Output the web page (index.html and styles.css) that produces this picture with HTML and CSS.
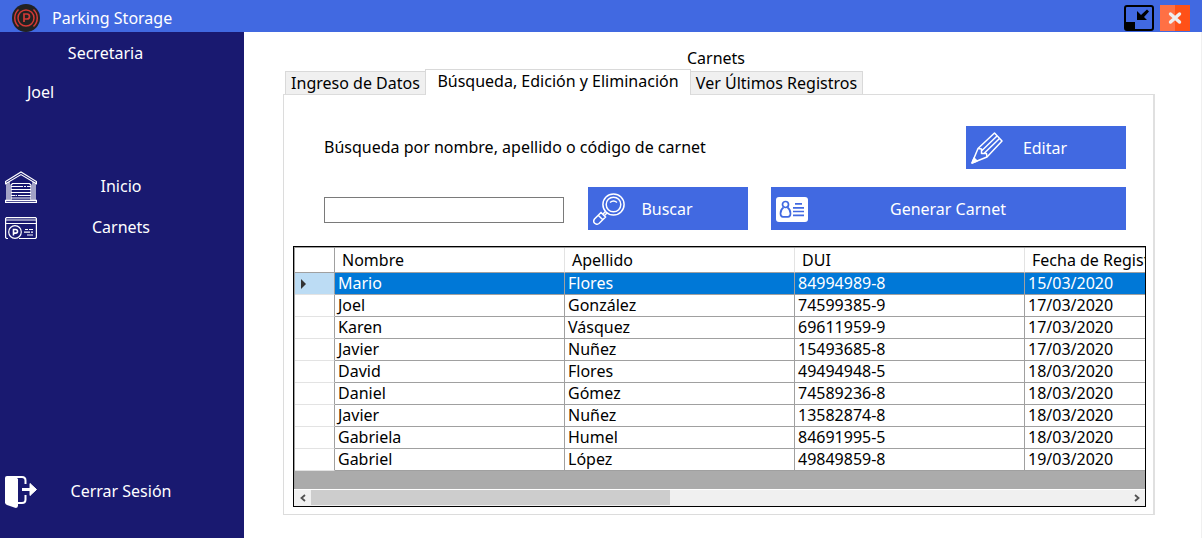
FILE: index.html
```html
<!DOCTYPE html>
<html lang="es">
<head>
<meta charset="utf-8">
<title>Parking Storage</title>
<link rel="stylesheet" href="styles.css">
</head>
<body>
<header class="titlebar">
  <svg class="logo" viewBox="0 0 28 28" width="28" height="28" fill="none" stroke="#d33a36" stroke-width="1.5">
    <circle cx="14" cy="14" r="14" fill="#222" stroke="none"/>
    <circle cx="14" cy="14" r="8"/>
    <path d="M12 18v-8h3a2.3 2.3 0 0 1 0 5h-3" stroke-width="1.7"/>
    <path d="M6.500 5.500a11.500 11.500 0 0 0 0 17M21.500 5.500a11.500 11.500 0 0 1 0 17"/>
  </svg>
  <h1 class="app-name">Parking Storage</h1>
  <div class="window-actions">
    <button class="window-button" type="button" aria-label="Restaurar">
      <svg viewBox="0 0 30 26" width="30" height="26">
        <rect x="1" y="1" width="28" height="24" rx="2" fill="none" stroke="#000" stroke-width="2"/>
        <path d="M1 17h10v8H1z"/>
        <path d="M13 6v9h10l-3-3 5-5.500-2-2-6 5.500z"/>
      </svg>
    </button>
    <button class="window-button" type="button" aria-label="Cerrar">
      <svg viewBox="0 0 30 26" width="30" height="26">
        <path fill="#ff7044" d="M0 0h15v26H0z"/><path fill="#ff5117" d="M15 0h15v26H15z"/>
        <path d="M10.500 9l9 8M19.500 9l-9 8" stroke="#eee" stroke-width="3.400" stroke-linecap="round"/>
      </svg>
    </button>
  </div>
</header>
<div class="layout">
  <aside class="sidebar">
    <p class="role">Secretaria</p>
    <p class="user">Joel</p>
    <nav class="menu">
      <button class="menu-item" type="button">
        <svg viewBox="0 0 32 32" width="32" height="32" fill="none" stroke="#fff" stroke-width="1.200">
          <path d="M.6 10.500L16 1l15.400 9.500v2.300L16 3.600.6 12.800zM2 12.200V29M4 11v18M30 12.200V29M28 11v18M.6 29.300h30.800v2H.6z"/>
          <path d="M6 29V14l1.500-1.500h17L26 14v15M6 15.500h12M22 15.500h4M6 18.500h20M6 21.500h20M6 24.500h4M13 24.500h13M6 27h20"/>
          <path d="M19 15.500h2M10.500 24.500h1.500"/>
        </svg>
        <span class="menu-label">Inicio</span>
      </button>
      <button class="menu-item" type="button">
        <svg viewBox="0 0 32 32" width="32" height="32" fill="none" stroke="#fff" stroke-width="1.200">
          <path d="M3 26.500H1.500l-.9-1V6.500l.9-.9h29l.9.900v19l-.9 1H14M.6 8h30.800M.6 11.500h30.800"/>
          <circle cx="10" cy="20" r="6.300"/>
          <path d="M8.500 23.500v-6h2.200a1.800 1.800 0 0 1 0 3.600H8.500" stroke-width="1.600"/>
          <path d="M20 17.500h3M24 17.500h4M19 20.200h6M26 20.200h2M22 23h6"/>
        </svg>
        <span class="menu-label">Carnets</span>
      </button>
    </nav>
    <button class="menu-item logout" type="button">
      <svg viewBox="0 0 32 32" width="32" height="32" fill="none" stroke="#fff">
        <path d="M0 2q0-2 2-2h8l3 3v26.500q0 3-3 2.300L2 29q-2-.8-2-2.500z" fill="#fff" stroke="none"/>
        <path d="M10 1h7q3.500 0 3.500 3.500V8M13 27h4q3.500 0 3.500-3.500V19" stroke-width="2"/>
        <path d="M17 13.500h9" stroke-width="3"/>
        <path d="M25 7.500l6.500 6-6.500 6z" fill="#fff" stroke-linejoin="round"/>
      </svg>
      <span class="menu-label">Cerrar Sesión</span>
    </button>
  </aside>
  <main class="main">
    <h2 class="page-title">Carnets</h2>
    <div class="tabs" role="tablist">
      <button class="tab tab-first" type="button" role="tab" aria-selected="false">Ingreso de Datos</button>
      <button class="tab tab-active" type="button" role="tab" aria-selected="true">Búsqueda, Edición y Eliminación</button>
      <button class="tab tab-last" type="button" role="tab" aria-selected="false">Ver Últimos Registros</button>
    </div>
    <section class="panel">
      <div class="tools">
        <div class="tool-row">
          <label class="search-label" for="search">Búsqueda por nombre, apellido o código de carnet</label>
          <button class="action edit" type="button">
            <svg viewBox="0 0 32 32" width="32" height="32" fill="none" stroke="#fff" stroke-width="1.500" stroke-linejoin="round">
              <path d="M1 31L7 16.500 23.500 1 31 9 16 25z"/>
              <path d="M7 16.500l3.500.5v4.500h5L16 25M10.500 19L26 4M13 21.500L28.500 6.500"/>
              <path d="M1 31l2-5 3 3z" fill="#fff"/>
            </svg>
            <span class="action-label">Editar</span>
          </button>
        </div>
        <div class="tool-row">
          <input class="search-input" id="search" type="text">
          <button class="action" type="button">
            <svg viewBox="0 0 32 32" width="32" height="32" fill="none" stroke="#fff" stroke-width="1.500">
              <circle cx="20.500" cy="11.500" r="10.600"/><circle cx="20.500" cy="11.500" r="7.300"/>
              <path d="M17 9.500q3.500-3 7 0M12.500 18.500L10 21M14 20l-2.500 2.500"/>
              <path d="M8 19.500l4.500 4.500-6.500 6.500q-2.300 1.600-4.300-.2t-.2-4.300zM5.500 22.500l4 4"/>
            </svg>
            <span class="action-label">Buscar</span>
          </button>
          <button class="action generate" type="button">
            <svg viewBox="0 0 32 32" width="32" height="32" fill="none" stroke="#4169e1" stroke-width="1.700">
              <rect y="4" width="32" height="25" rx="3" fill="#fff" stroke="none"/>
              <circle cx="9.500" cy="11.500" r="3"/>
              <path d="M7.500 14.500Q4.500 16.500 4.500 20.500q0 3.300 2.500 3.300h5q2.500 0 2.500-3.300 0-4-3-6M19 10.800h7M17 14.800h11M17 18.500h11M17 22.300h11"/>
            </svg>
            <span class="action-label">Generar Carnet</span>
          </button>
        </div>
      </div>
      <div class="grid">
        <div class="grid-view">
          <table class="records">
            <thead>
              <tr><th class="marker"></th><th>Nombre</th><th>Apellido</th><th>DUI</th><th>Fecha de Registro</th></tr>
            </thead>
            <tbody>
              <tr class="selected"><td class="marker"><svg viewBox="0 0 6 10" width="6" height="10"><path d="M1 0l5 5-5 5z" fill="#333"/></svg></td><td>Mario</td><td>Flores</td><td>84994989-8</td><td>15/03/2020</td></tr>
              <tr><td class="marker"></td><td>Joel</td><td>González</td><td>74599385-9</td><td>17/03/2020</td></tr>
              <tr><td class="marker"></td><td>Karen</td><td>Vásquez</td><td>69611959-9</td><td>17/03/2020</td></tr>
              <tr><td class="marker"></td><td>Javier</td><td>Nuñez</td><td>15493685-8</td><td>17/03/2020</td></tr>
              <tr><td class="marker"></td><td>David</td><td>Flores</td><td>49494948-5</td><td>18/03/2020</td></tr>
              <tr><td class="marker"></td><td>Daniel</td><td>Gómez</td><td>74589236-8</td><td>18/03/2020</td></tr>
              <tr><td class="marker"></td><td>Javier</td><td>Nuñez</td><td>13582874-8</td><td>18/03/2020</td></tr>
              <tr><td class="marker"></td><td>Gabriela</td><td>Humel</td><td>84691995-5</td><td>18/03/2020</td></tr>
              <tr><td class="marker"></td><td>Gabriel</td><td>López</td><td>49849859-8</td><td>19/03/2020</td></tr>
            </tbody>
          </table>
        </div>
        <div class="scrollbar">
          <button class="scroll-arrow" type="button" aria-label="Desplazar a la izquierda"><svg viewBox="0 0 8 8" width="8" height="8"><path d="M6 1L2.500 4 6 7" fill="none" stroke="#505050" stroke-width="1.800"/></svg></button>
          <div class="scroll-track"><div class="scroll-thumb"></div></div>
          <button class="scroll-arrow" type="button" aria-label="Desplazar a la derecha"><svg viewBox="0 0 8 8" width="8" height="8"><path d="M2 1l3.500 3L2 7" fill="none" stroke="#505050" stroke-width="1.800"/></svg></button>
        </div>
      </div>
    </section>
  </main>
</div>
</body>
</html>
```
FILE: styles.css
```css
* {
  box-sizing: border-box;
}

body {
  margin: 0;
  min-height: 100vh;
  display: flex;
  flex-direction: column;
  background: #fff;
  color: #000;
  font: 16px/22px "Noto Sans", "Lucida Sans", sans-serif;
}

button,
input {
  font: inherit;
  color: inherit;
}

button {
  margin: 0;
  padding: 0;
  border: 0;
  background: none;
}

svg {
  display: block;
  flex: none;
}

h1,
h2,
p {
  margin: 0;
  font-size: 16px;
  font-weight: 400;
}

.titlebar {
  height: 32px;
  display: flex;
  align-items: center;
  padding: 3px 12px 0;
  background: #4169e1;
  color: #fff;
}

.app-name {
  margin: 0 0 0 12px;
}

.window-actions {
  display: flex;
  gap: 6px;
  margin-left: auto;
}

.layout {
  flex: 1;
  display: flex;
}

.sidebar {
  width: 244px;
  flex: none;
  display: flex;
  flex-direction: column;
  padding: 10px 0 30px;
  background: #191970;
  color: #fff;
}

.role {
  padding-right: 33px;
  text-align: center;
}

.user {
  padding: 17px 27px 0;
}

.menu {
  display: flex;
  flex-direction: column;
  gap: 9px;
  padding-top: 68px;
}

.menu-item {
  width: 100%;
  display: flex;
  align-items: center;
  padding-left: 5px;
}

.menu-label {
  width: 168px;
  padding-bottom: 2px;
  text-align: center;
}

.logout {
  margin-top: auto;
}

.main {
  flex: 1;
  min-width: 0;
  padding: 15px 46px 23px 39px;
  border-right: 1px solid #f0f0f0;
}

.page-title {
  padding-right: 6px;
  text-align: center;
}

.tabs {
  position: relative;
  display: flex;
  align-items: flex-end;
  height: 26px;
  margin: 0 0 -1px 2px;
}

.tab {
  height: 23px;
  margin-bottom: 1px;
  border: 1px solid #d9d9d9;
  border-bottom: 0;
  background: #f0f0f0;
  white-space: nowrap;
}

.tab-first {
  width: 140px;
  border-right: 0;
}

.tab-active {
  width: 266px;
  height: 26px;
  margin-bottom: 0;
  padding-bottom: 3px;
  background: #fff;
}

.tab-last {
  width: 172px;
  border-left: 0;
}

.panel {
  padding: 31px 7px 7px 9px;
  border: 1px solid #dcdcdc;
  border-right: 2px solid #e0e0e0;
}

.tools {
  display: grid;
  gap: 18px;
  padding: 0 20px 16px 31px;
}

.tool-row {
  display: flex;
  align-items: center;
}

.search-label {
  padding-bottom: 2px;
}

.search-input {
  width: 240px;
  height: 26px;
  margin-top: 3px;
  margin-right: 24px;
  padding: 0 4px;
  border: 1px solid #7a7a7a;
  background: #fff;
}

.action {
  width: 160px;
  height: 43px;
  display: flex;
  align-items: center;
  padding-left: 5px;
  background: #4169e1;
  color: #fff;
}

.action-label {
  flex: 1;
  padding-right: 39px;
  text-align: center;
}

.edit {
  margin-left: auto;
}

.generate {
  flex: 1;
  margin-left: 23px;
}

.generate .action-label {
  padding: 0 38px 0 0;
}

.grid {
  border: 1px solid #000;
  background: #ababab;
}

.grid-view {
  height: 242px;
  overflow: hidden;
  border: 1px solid #a0a0a0;
  border-width: 1px 0 0 1px;
}

.records {
  width: 960px;
  table-layout: fixed;
  border-collapse: separate;
  border-spacing: 0;
  background: #fff;
}

.records th {
  height: 25px;
  padding: 0 7px;
  border-right: 1px solid #e3e3e3;
  border-bottom: 1px solid #a0a0a0;
  font-weight: 400;
  line-height: 24px;
  text-align: left;
}

.records td {
  height: 22px;
  padding: 0 3px;
  border-right: 1px solid #a0a0a0;
  border-bottom: 1px solid #a0a0a0;
  line-height: 21px;
}

.records .marker {
  width: 40px;
  padding: 0 5px;
  border-right: 1px solid #a0a0a0;
}

.records td.marker {
  border-bottom-color: #e3e3e3;
}

.selected td {
  background: #0078d7;
  color: #fff;
}

.selected td.marker {
  background: #bcdcf4;
}

.scrollbar {
  height: 17px;
  display: flex;
  align-items: stretch;
  border-top: 1px solid #fff;
  background: #f0f0f0;
}

.scroll-arrow {
  width: 17px;
  display: grid;
  place-items: center;
}

.scroll-track {
  flex: 1;
}

.scroll-thumb {
  width: 44%;
  height: 15px;
  background: #cdcdcd;
}
```
